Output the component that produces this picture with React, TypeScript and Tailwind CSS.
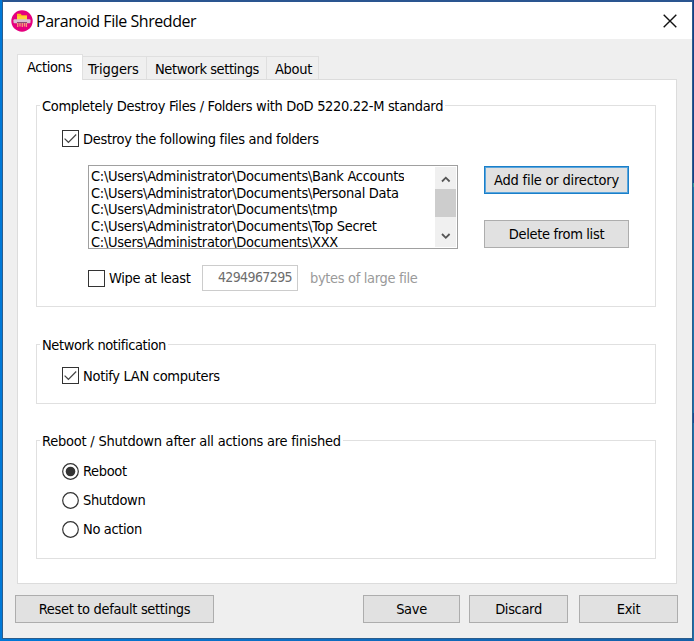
import type { ReactNode } from 'react';

const files = ['Bank Accounts', 'Personal Data', 'tmp', 'Top Secret', 'XXX'];

function CheckBox({ checked = false, label }: { checked?: boolean; label: string }) {
  return (
    <div className="flex h-[17px] items-center tracking-[-0.3px]">
      <span className="flex size-[17px] shrink-0 items-center justify-center border-[1.5px] border-[#333] bg-white">
        {checked && (
          <svg width="15" height="15" viewBox="0 0 15 15" fill="none" stroke="#444" strokeWidth="1.2">
            <path d="M1.6 7.6 5.4 11.3 13.2 3.5" />
          </svg>
        )}
      </span>
      <span className="ml-[4px]">{label}</span>
    </div>
  );
}

function Radio({ checked = false, label }: { checked?: boolean; label: string }) {
  return (
    <div className="flex h-[17px] items-center">
      <svg className="shrink-0" width="17" height="17" viewBox="0 0 17 17">
        <circle cx="8.5" cy="8.5" r="7.8" fill="#fff" stroke="#333" strokeWidth="1.2" />
        {checked && <circle cx="8.5" cy="8.5" r="4.8" fill="#333" />}
      </svg>
      <span className="-mt-px ml-[4px]">{label}</span>
    </div>
  );
}

function Group({ title, className, children }: { title: string; className: string; children: ReactNode }) {
  return (
    <fieldset className={`w-[620px] border border-[#e0e0e0] ${className}`}>
      <legend className="ml-[3px] h-[20px] px-[2px] leading-[22px]">{title}</legend>
      {children}
    </fieldset>
  );
}

function Button({ className, children }: { className: string; children: ReactNode }) {
  return (
    <button className={`flex h-[28px] items-center justify-center border bg-[#e1e1e1] ${className}`}>{children}</button>
  );
}

export default function App() {
  return (
    <div className="flex h-[641px] w-[694px] overflow-hidden bg-gradient-to-r from-[#0078d7] to-[#1560a8] font-['DejaVu_Sans_Condensed','DejaVu_Sans',sans-serif] text-[14.5px] leading-[20px] tracking-[-0.33px] whitespace-pre text-black">
      <div className="ml-[2px] flex h-[639px] w-[691px] shrink-0 flex-col border border-t-2 border-[#2b5d8c] border-t-[#2a5590] bg-[#efefef]">
        <header className="flex h-[37px] shrink-0 items-center bg-white pl-[8px] pr-[15px]">
          <svg width="22" height="22" viewBox="0 0 22 22">
            <circle cx="11" cy="11" r="10.7" fill="#e5007e" />
            <path d="M6 3.8h3.6l1.2 1.4H16V10H6z" fill="#ffb81c" />
            <path d="M6 6.2h10V10H6z" fill="#ffd23c" />
            <rect x="2.5" y="9.2" width="17" height="4" rx="1" fill="#d9c0d0" />
            <path d="M6 12h10v1.6H6z" fill="#8d4a72" />
            <path d="M6.7 13v4M9 13v3.4M11.3 13v4M13.5 13v3.4M15.4 13v4" stroke="#f79a78" strokeWidth="1.3" />
          </svg>
          <h1 className="ml-[3px] font-['Open_Sans','Noto_Sans',sans-serif] text-[16px] tracking-[-0.45px]">Paranoid File Shredder</h1>
          <svg className="ml-auto" width="14" height="14" viewBox="0 0 14 14" stroke="#111" strokeWidth="1.4">
            <path d="M.7.7 13.3 13.3M13.3.7.7 13.3" />
          </svg>
        </header>

        <nav className="ml-[14px] mt-[15px] flex h-[25px] shrink-0 items-end">
          <div className="z-10 -mb-px flex h-[26px] w-[66px] items-center border border-b-0 border-[#e0e0e0] bg-white pb-px pl-[9px] tracking-[-0.4px]">Actions</div>
          <div className="flex h-[23px] w-[64px] items-center border-r border-t border-[#dfdfdf] pl-[5px] pt-px tracking-[-0.1px]">Triggers</div>
          <div className="flex h-[23px] w-[120px] items-center border-r border-t border-[#dfdfdf] pl-[8px] pt-px tracking-[-0.42px]">Network settings</div>
          <div className="flex h-[23px] w-[52px] items-center border-r border-t border-[#dfdfdf] pl-[8px] pt-px">About</div>
        </nav>

        <main className="ml-[14px] flex h-[505px] w-[660px] shrink-0 flex-col border border-[#dcdcdc] bg-white pl-[18px] pt-[15px]">
          <Group title="Completely Destroy Files / Folders with DoD 5220.22-M standard" className="h-[212px]">
            <div className="pl-[25px] pt-[15px]">
              <CheckBox checked label="Destroy the following files and folders" />
              <div className="mt-[18px] flex pl-[26px]">
                <div className="flex h-[84px] w-[370px] justify-between border border-[#a0a0a0] bg-white">
                  <ul className="h-[82px] overflow-hidden pl-[2px] pt-[2px] leading-[16.6px] tracking-[-0.3px]">
                    {files.map((f) => (
                      <li key={f}>{'C:\\Users\\Administrator\\Documents\\' + f}</li>
                    ))}
                  </ul>
                  <div className="my-px mr-px flex w-[21px] flex-col items-center bg-[#f0f0f0]">
                    <svg width="21" height="22" viewBox="0 0 21 22" fill="none" stroke="#555" strokeWidth="1.8">
                      <path d="M7 14.5 10.8 10.7 14.6 14.5" />
                    </svg>
                    <div className="h-[28px] w-full bg-[#cdcdcd]" />
                    <svg width="21" height="30" viewBox="0 0 21 30" fill="none" stroke="#555" strokeWidth="1.8">
                      <path d="M7 17 10.8 20.8 14.6 17" />
                    </svg>
                  </div>
                </div>
                <div className="ml-[26px] flex flex-col gap-[26px] pt-px">
                  <Button className="w-[145px] border-[1.5px] border-[#1a7fc9] tracking-[-0.2px] outline -outline-offset-2 outline-[#5aa5dc]">Add file or directory</Button>
                  <Button className="w-[145px] border-[#adadad]">Delete from list</Button>
                </div>
              </div>
              <div className="mt-[16px] flex h-[26px] items-center pl-[26px]">
                <div className="w-[114px]">
                  <CheckBox label="Wipe at least" />
                </div>
                <div className="h-[26px] w-[96px] border border-[#cccccc] pr-[5px] text-right text-[14px] leading-[22px] tracking-[-0.6px] text-[#6d6d6d]">4294967295</div>
                <span className="ml-[12px] text-[#9a9a9a]">bytes of large file</span>
              </div>
            </div>
          </Group>

          <Group title="Network notification" className="mt-[27px] h-[70px] tracking-[-0.4px]">
            <div className="pl-[25px] pt-[13px]">
              <CheckBox checked label="Notify LAN computers" />
            </div>
          </Group>

          <Group title="Reboot / Shutdown after all actions are finished" className="mt-[26px] h-[129px] tracking-[-0.23px]">
            <div className="flex flex-col gap-[12px] pl-[25px] pt-[13px] tracking-[-0.35px]">
              <Radio checked label="Reboot" />
              <Radio label="Shutdown" />
              <Radio label="No action" />
            </div>
          </Group>
        </main>

        <footer className="flex pl-[12px] pt-[11px]">
          <Button className="w-[199px] border-[#adadad]">Reset to default settings</Button>
          <Button className="ml-[149px] w-[97px] border-[#adadad]">Save</Button>
          <Button className="ml-[9px] w-[99px] border-[#adadad]">Discard</Button>
          <Button className="ml-[11px] w-[99px] border-[#adadad]">Exit</Button>
        </footer>
      </div>
      <div className="flex w-px shrink-0 flex-col bg-[#1b72ad]">
        <div className="h-[183px] bg-[#153f86]" />
        <div className="h-[4px] bg-[#2a9a9a]" />
        <div className="mt-[226px] h-[10px] bg-[#174a94]" />
      </div>
    </div>
  );
}
